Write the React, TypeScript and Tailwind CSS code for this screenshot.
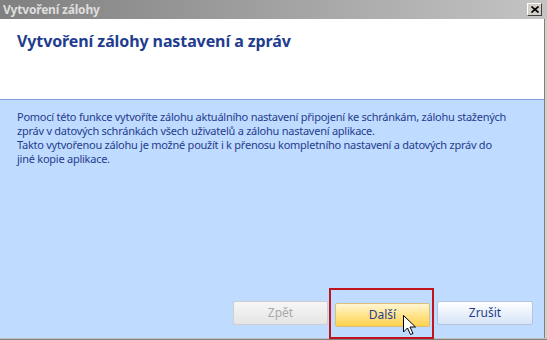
import React from 'react';

const font = { fontFamily: '"Noto Sans", "Open Sans", sans-serif' };

const Cursor: React.FC = () => (
  <svg width="15" height="22" viewBox="0 0 15 22" className="absolute left-[67px] top-[13px]">
    <path
      d="M1.5 1.5 L1.5 18 L5.5 14 L8.5 20.5 L11 19.5 L8 13 L13.5 13 Z"
      fill="#ffffff"
      stroke="#000000"
      strokeWidth="1"
      strokeLinejoin="miter"
    />
  </svg>
);

const App: React.FC = () => {
  return (
    <div className="w-[547px] h-[340px] flex flex-col bg-[#d4d0c8] overflow-hidden" style={font}>
      {/* Title bar */}
      <div className="h-[19px] flex items-center justify-between pl-[3px] pr-[5px] bg-gradient-to-r from-[#808080] to-[#c4c4c4]">
        <span className="text-[12px] font-bold text-[#dedede] leading-none tracking-[-0.2px]">Vytvoření zálohy</span>
        <div className="w-[15px] h-[13px] bg-[#d4d0c8] border border-t-white border-l-white border-r-[#404040] border-b-[#404040] flex items-center justify-center">
          <svg width="8" height="7" viewBox="0 0 8 7">
            <path d="M0.5 0.5 L7.5 6.5 M7.5 0.5 L0.5 6.5" stroke="#000" strokeWidth="1.6" />
          </svg>
        </div>
      </div>

      <div className="flex flex-1 min-h-0">
        <div className="flex-1 flex flex-col">
          {/* Header */}
          <div className="h-[81px] bg-white pl-[17px] pt-[10px] border-b border-[#7ea4dc]">
            <h1 className="text-[16px] font-bold text-[#1f3d8e] tracking-[-0.1px]">Vytvoření zálohy nastavení a zpráv</h1>
          </div>

          {/* Body */}
          <div className="flex-1 flex flex-col bg-[#bfdbff] pl-[17px] pr-[20px] pt-[10px]">
            <p className="text-[11px] leading-[14px] text-[#1f3d8e] tracking-[-0.25px]">
              Pomocí této funkce vytvoříte zálohu aktuálního nastavení připojení ke schránkám, zálohu stažených
              <br />
              zpráv v datových schránkách všech uživatelů a zálohu nastavení aplikace.
              <br />
              Takto vytvořenou zálohu je možné použít i k přenosu kompletního nastavení a datových zpráv do
              <br />
              jiné kopie aplikace.
            </p>

            <div className="mt-auto flex justify-end gap-[7px] pb-[11px] mr-[-9px]">
              <button
                disabled
                className="w-[95px] h-[24px] rounded-[2px] border border-[#cfcfcf] bg-gradient-to-b from-[#f7f7f7] to-[#e4e4e4] text-[12px] text-[#a8a8a8]"
              >
                Zpět
              </button>
              <div className="relative">
                <div className="absolute left-[-6px] right-[-4px] top-[-13px] bottom-[-12px] border-2 border-[#c0141c]" />
                <button className="relative w-[95px] h-[24px] rounded-[2px] border border-[#d8c07a] bg-gradient-to-b from-[#fff6d2] via-[#ffe48c] to-[#ffd24a] text-[12px] text-[#1f3d8e]">
                  Další
                </button>
                <Cursor />
              </div>
              <button className="w-[96px] h-[24px] rounded-[2px] border border-[#b4c4dc] bg-gradient-to-b from-[#ffffff] to-[#d6e4f6] text-[12px] text-[#1f3d8e]">
                Zrušit
              </button>
            </div>
          </div>
        </div>
        {/* Right frame */}
        <div className="w-[3px] border-l border-[#808080] bg-[#d4d0c8]" />
      </div>
      <div className="h-[2px] bg-[#808080] border-t border-[#c0c0c0]" />
    </div>
  );
};

export default App;
